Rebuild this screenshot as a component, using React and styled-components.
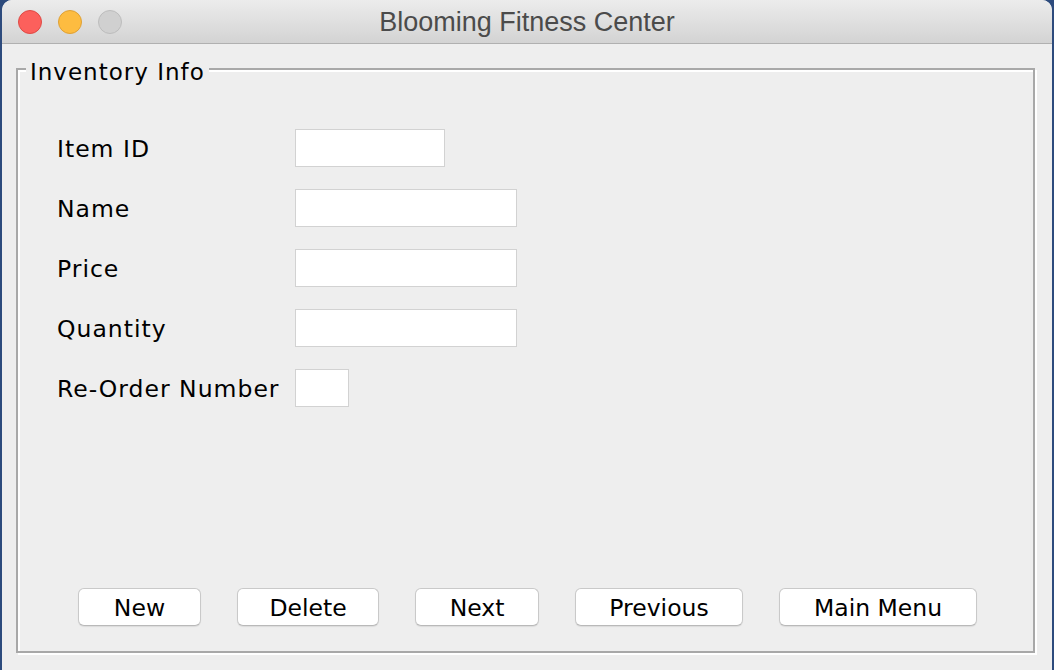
import React from "react";
import styled, { createGlobalStyle } from "styled-components";

const GlobalStyle = createGlobalStyle`
  html, body {
    margin: 0;
    padding: 0;
    background: #2d4b7d;
  }
  * {
    box-sizing: border-box;
  }
`;

const Window = styled.div`
  margin: 0 2px;
  height: 670px;
  display: flex;
  flex-direction: column;
  background: #eeeeee;
  border-radius: 10px 10px 0 0;
  overflow: hidden;
`;

const TitleBar = styled.div`
  height: 44px;
  flex-shrink: 0;
  display: grid;
  grid-template-columns: 1fr auto 1fr;
  align-items: center;
  background: linear-gradient(#ececec, #d3d3d3);
  border-bottom: 1px solid #b0b0b0;
`;

const Lights = styled.div`
  display: flex;
  gap: 16px;
  padding-left: 16px;
  margin-top: 1px;
`;

const Light = styled.span`
  width: 24px;
  height: 24px;
  border-radius: 50%;
  background: ${(p) => p.$fill};
  border: 1px solid ${(p) => p.$edge};
`;

const Title = styled.div`
  font-family: "Liberation Sans", Arial, sans-serif;
  font-size: 27px;
  color: #4b4b4b;
  margin-top: 2px;
`;

const Body = styled.div`
  flex: 1;
  display: flex;
  padding: 9px 17px 17px 14px;
`;

const Group = styled.fieldset`
  flex: 1;
  margin: 0;
  padding: 0;
  min-width: 0;
  border: 2px solid #a8a8a8;
  box-shadow: 2px 2px 0 #ffffff, inset 2px 2px 0 #ffffff;
  font-family: "DejaVu Sans", Verdana, sans-serif;
  font-size: 23.5px;
  letter-spacing: 1px;
  color: #000;
`;

const Legend = styled.legend`
  margin-left: 8px;
  padding: 6px 4px 0;
  line-height: 26px;
  font-size: 23px;
  background: #eeeeee;
`;

const Inner = styled.div`
  height: 100%;
  display: flex;
  flex-direction: column;
`;

const Form = styled.div`
  display: grid;
  grid-template-columns: 238px auto;
  justify-content: start;
  row-gap: 22px;
  margin-top: 44px;
  padding-left: 39px;
`;

const Label = styled.label`
  display: flex;
  align-items: center;
  height: 38px;
  padding-top: 2px;
  white-space: nowrap;
`;

const Field = styled.input`
  width: ${(p) => p.$w}px;
  height: 38px;
  border: 1px solid #d2d2d2;
  background: #ffffff;
  outline: none;
  padding: 0 6px;
  font: inherit;
`;

const ButtonRow = styled.div`
  margin-top: auto;
  display: flex;
  justify-content: center;
  gap: 36px;
  padding: 0 0 25px 4px;
`;

const Button = styled.button`
  width: ${(p) => p.$w}px;
  height: 38px;
  background: #ffffff;
  border: 1px solid #c9c9c9;
  border-bottom-color: #b9b9b9;
  border-radius: 6px;
  box-shadow: 0 1px 1px rgba(0, 0, 0, 0.08);
  font: inherit;
  color: #000;
  padding: 1px 0 0;
`;

const fields = [
  { label: "Item ID", w: 150 },
  { label: "Name", w: 222 },
  { label: "Price", w: 222 },
  { label: "Quantity", w: 222 },
  { label: "Re-Order Number", w: 54 },
];

const buttons = [
  { text: "New", w: 123 },
  { text: "Delete", w: 142 },
  { text: "Next", w: 124 },
  { text: "Previous", w: 168 },
  { text: "Main Menu", w: 198 },
];

function App() {
  return (
    <>
      <GlobalStyle />
      <Window>
        <TitleBar>
          <Lights>
            <Light $fill="#fc605c" $edge="#de4a45" />
            <Light $fill="#fdbc40" $edge="#dea035" />
            <Light $fill="#d0d0d0" $edge="#bcbcbc" />
          </Lights>
          <Title>Blooming Fitness Center</Title>
          <div />
        </TitleBar>
        <Body>
          <Group>
            <Legend>Inventory Info</Legend>
            <Inner>
              <Form>
                {fields.map((f) => (
                  <React.Fragment key={f.label}>
                    <Label>{f.label}</Label>
                    <Field $w={f.w} />
                  </React.Fragment>
                ))}
              </Form>
              <ButtonRow>
                {buttons.map((b) => (
                  <Button key={b.text} $w={b.w}>
                    {b.text}
                  </Button>
                ))}
              </ButtonRow>
            </Inner>
          </Group>
        </Body>
      </Window>
    </>
  );
}

export default App;
